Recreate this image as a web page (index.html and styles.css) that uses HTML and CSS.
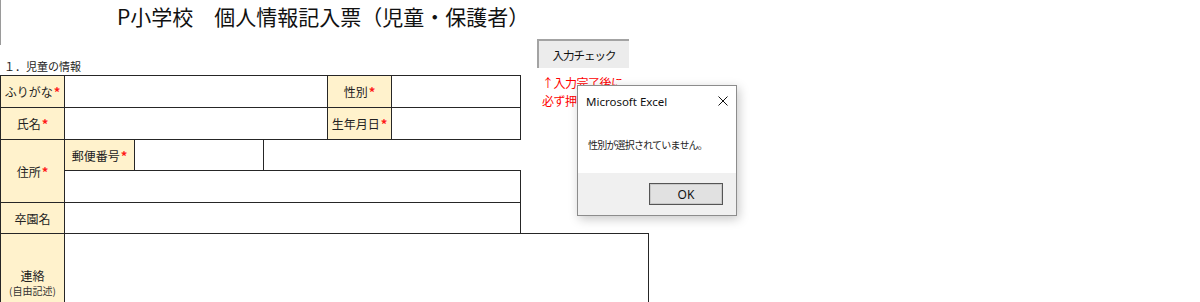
FILE: index.html
```html
<!DOCTYPE html>
<html lang="ja">
<head>
<meta charset="utf-8">
<title>P小学校 個人情報記入票</title>
<link rel="stylesheet" href="styles.css">
</head>
<body>
<div class="page">
  <div class="sheet">
    <div class="header">
      <h1 class="title">P小学校　個人情報記入票（児童・保護者）</h1>
    </div>
    <div class="section">１．児童の情報</div>
    <table class="form">
      <colgroup>
        <col class="w64"><col class="w70"><col class="w129"><col class="w64"><col class="w64"><col class="w129"><col class="w128">
      </colgroup>
      <tr class="r32">
        <th class="lbl">ふりがな<span class="req">*</span></th>
        <td colspan="3"></td>
        <th class="lbl">性別<span class="req">*</span></th>
        <td></td>
        <td class="blank"></td>
      </tr>
      <tr class="r32">
        <th class="lbl">氏名<span class="req">*</span></th>
        <td colspan="3"></td>
        <th class="lbl">生年月日<span class="req">*</span></th>
        <td></td>
        <td class="blank"></td>
      </tr>
      <tr class="r31">
        <th class="lbl addr" rowspan="2">住所<span class="req">*</span></th>
        <th class="lbl">郵便番号<span class="req">*</span></th>
        <td></td>
        <td colspan="3" class="open"></td>
        <td class="blank"></td>
      </tr>
      <tr class="r32">
        <td colspan="5"></td>
        <td class="blank"></td>
      </tr>
      <tr class="r31">
        <th class="lbl">卒園名</th>
        <td colspan="5"></td>
        <td class="blank"></td>
      </tr>
      <tr class="r98">
        <th class="lbl big">連絡<span class="sub">(自由記述)</span></th>
        <td colspan="6"></td>
      </tr>
    </table>
  </div>
  <div class="side">
    <button class="check" type="button">入力チェック</button>
    <p class="note">↑入力完了後に<br>必ず押してください</p>
  </div>
</div>

<div class="dialog">
  <div class="dlg-title">
    <span>Microsoft Excel</span>
    <svg class="close" width="10" height="10" viewBox="0 0 10 10"><path d="M0.5 0.5 L9.5 9.5 M9.5 0.5 L0.5 9.5" stroke="#111" stroke-width="1" fill="none"/></svg>
  </div>
  <div class="dlg-body">性別が選択されていません。</div>
  <div class="dlg-foot"><button class="ok" type="button">OK</button></div>
</div>
</body>
</html>
```
FILE: styles.css
```css
html, body {
  margin: 0;
  padding: 0;
}
body {
  width: 1200px;
  height: 302px;
  overflow: hidden;
  position: relative;
  background: #ffffff;
  color: #1c1c1c;
  font-family: "Noto Sans CJK JP", "Noto Sans", sans-serif;
}
.page {
  display: flex;
  align-items: flex-start;
}
.sheet {
  width: 537px;
  flex: none;
}
.header {
  height: 45px;
  box-sizing: border-box;
  border-left: 1px solid #9a9a9a;
}
.title {
  margin: 0;
  padding-left: 116px;
  font-size: 21px;
  font-weight: 400;
  line-height: 32px;
  white-space: nowrap;
  color: #111;
}
.section {
  margin-top: 13px;
  height: 17px;
  line-height: 17px;
  font-size: 11px;
  padding-left: 4px;
  white-space: nowrap;
}
.form {
  border-collapse: collapse;
  table-layout: fixed;
  width: 648px;
}
.w64 { width: 64px; }
.w70 { width: 70px; }
.w129 { width: 129px; }
.w128 { width: 128px; }
.r32 { height: 32px; }
.r31 { height: 31px; }
.r98 { height: 98px; }
.form td,
.form th {
  padding: 0;
  border: 1px solid #262626;
}
.form .lbl {
  background: #fff2cc;
  font-size: 12px;
  font-weight: 400;
  text-align: center;
  vertical-align: middle;
  white-space: nowrap;
  color: #222;
}
.form .addr {
  box-shadow: inset 2px 0 0 -0px transparent;
}
.form .open {
  border-right: none;
}
.form .blank {
  border: none;
}
.req {
  color: #ff1a1a;
  font-size: 13px;
  font-weight: 700;
  line-height: 1;
  margin-left: 1px;
}
.big {
  font-size: 13px;
  line-height: 17px;
}
.sub {
  display: block;
  font-size: 10px;
  line-height: 14px;
  color: #333;
}
.side {
  padding-top: 39px;
}
.check {
  display: block;
  box-sizing: border-box;
  width: 92px;
  height: 29px;
  padding: 0;
  border: none;
  border-top: 2px solid #a3a3a3;
  border-left: 2px solid #a3a3a3;
  background: #ececec;
  color: #111;
  font-family: "Noto Sans CJK JP", sans-serif;
  font-size: 11.5px;
  letter-spacing: -1px;
}
.note {
  margin: 6px 0 0 5px;
  color: #ff0000;
  font-size: 12px;
  line-height: 18px;
  letter-spacing: -0.5px;
  white-space: nowrap;
}
.dialog {
  position: absolute;
  left: 577px;
  top: 85px;
  width: 160px;
  height: 131px;
  box-sizing: border-box;
  border: 1px solid #8c8c8c;
  background: #ffffff;
  box-shadow: 2px 3px 10px rgba(0, 0, 0, 0.22);
  display: flex;
  flex-direction: column;
}
.dlg-title {
  height: 30px;
  flex: none;
  display: flex;
  align-items: center;
  justify-content: space-between;
  padding: 0 8px 0 8px;
  font-family: "Noto Sans", sans-serif;
  font-size: 11.5px;
  color: #111;
}
.close {
  display: block;
}
.dlg-body {
  flex: 1;
  display: flex;
  align-items: center;
  padding-left: 10px;
  font-size: 10px;
  letter-spacing: -0.8px;
  color: #222;
  white-space: nowrap;
}
.dlg-foot {
  height: 42px;
  flex: none;
  background: #f0f0f0;
  display: flex;
  justify-content: flex-end;
  align-items: center;
  padding-right: 13px;
}
.ok {
  box-sizing: border-box;
  width: 74px;
  height: 22px;
  padding: 0;
  border: 1px solid #555555;
  box-shadow: inset 0 0 0 1px #c9c9c9;
  background: #e1e1e1;
  font-family: "Noto Sans", sans-serif;
  font-size: 12px;
  color: #111;
}
```
